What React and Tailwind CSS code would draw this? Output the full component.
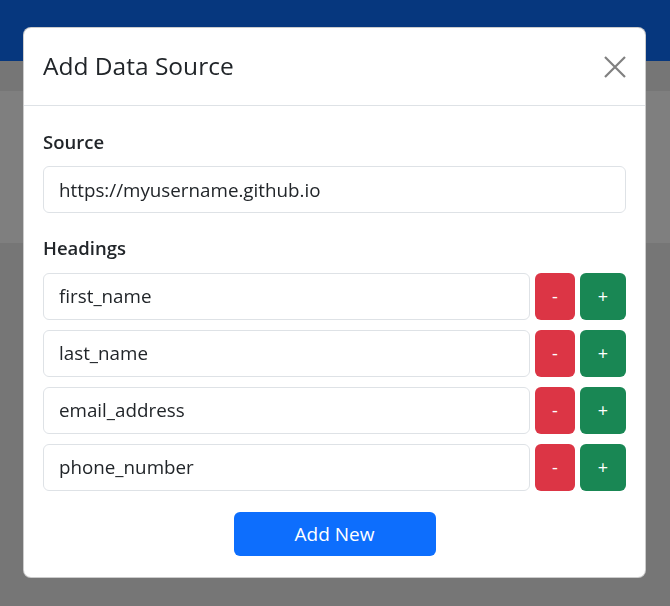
import { useState } from 'react'

const font = { fontFamily: '"Open Sans", "Noto Sans", sans-serif' }

function HeadingRow({ value, onChange, onRemove, onAdd }) {
  return (
    <div className="flex gap-[5px] h-[47px]">
      <input
        value={value}
        onChange={(e) => onChange(e.target.value)}
        className="flex-1 min-w-0 border border-[#dee2e6] rounded-[6px] px-[15px] text-[18.8px] text-[#212529] outline-none"
      />
      <button
        onClick={onRemove}
        className="w-[40px] rounded-[6px] bg-[#dc3545] text-white text-[18px]"
      >
        -
      </button>
      <button
        onClick={onAdd}
        className="w-[46px] rounded-[6px] bg-[#198754] text-white text-[18px]"
      >
        +
      </button>
    </div>
  )
}

export default function App() {
  const [source, setSource] = useState('https://myusername.github.io')
  const [headings, setHeadings] = useState([
    'first_name',
    'last_name',
    'email_address',
    'phone_number',
  ])

  const update = (i, v) => setHeadings((h) => h.map((x, j) => (j === i ? v : x)))
  const remove = (i) => setHeadings((h) => h.filter((_, j) => j !== i))
  const insert = (i) =>
    setHeadings((h) => [...h.slice(0, i + 1), '', ...h.slice(i + 1)])

  return (
    <div className="min-h-[606px] bg-[#ececec]" style={font}>
      {/* page behind the modal */}
      <div className="h-[61px] bg-[#0d6efd]" />
      <div className="h-[30px]" />
      <div className="h-[152px] bg-white" />

      <div className="fixed inset-0 bg-black/50">
        <div className="w-[623px] ml-[23px] mt-[27px] bg-white rounded-[8px] border border-black/20 overflow-hidden">
          <div className="flex items-center justify-between h-[78px] px-[19px] border-b border-[#dee2e6]">
            <h4 className="text-[24.5px] font-medium text-[#212529] leading-tight">
              Add Data Source
            </h4>
            <button className="w-[22px] h-[22px] text-[#808080]">
              <svg viewBox="0 0 22 22" width="22" height="22">
                <path
                  d="M1 1 L21 21 M21 1 L1 21"
                  stroke="currentColor"
                  strokeWidth="2.2"
                  fill="none"
                />
              </svg>
            </button>
          </div>

          <div className="px-[19px] pt-[22px] pb-[21px]">
            <label className="block text-[18.5px] font-semibold text-[#212529] leading-[27px] mb-[11px]">
              Source
            </label>
            <input
              value={source}
              onChange={(e) => setSource(e.target.value)}
              className="w-full h-[47px] border border-[#dee2e6] rounded-[6px] px-[15px] text-[18.8px] text-[#212529] outline-none"
            />

            <label className="block text-[18.5px] font-semibold text-[#212529] leading-[27px] mt-[21px] mb-[12px]">
              Headings
            </label>
            <div className="flex flex-col gap-[10px]">
              {headings.map((h, i) => (
                <HeadingRow
                  key={i}
                  value={h}
                  onChange={(v) => update(i, v)}
                  onRemove={() => remove(i)}
                  onAdd={() => insert(i)}
                />
              ))}
            </div>

            <div className="flex justify-center mt-[21px]">
              <button
                onClick={() => setHeadings((h) => [...h, ''])}
                className="w-[202px] h-[44px] rounded-[6px] bg-[#0d6efd] text-white text-[19px]"
              >
                Add New
              </button>
            </div>
          </div>
        </div>
      </div>
    </div>
  )
}
